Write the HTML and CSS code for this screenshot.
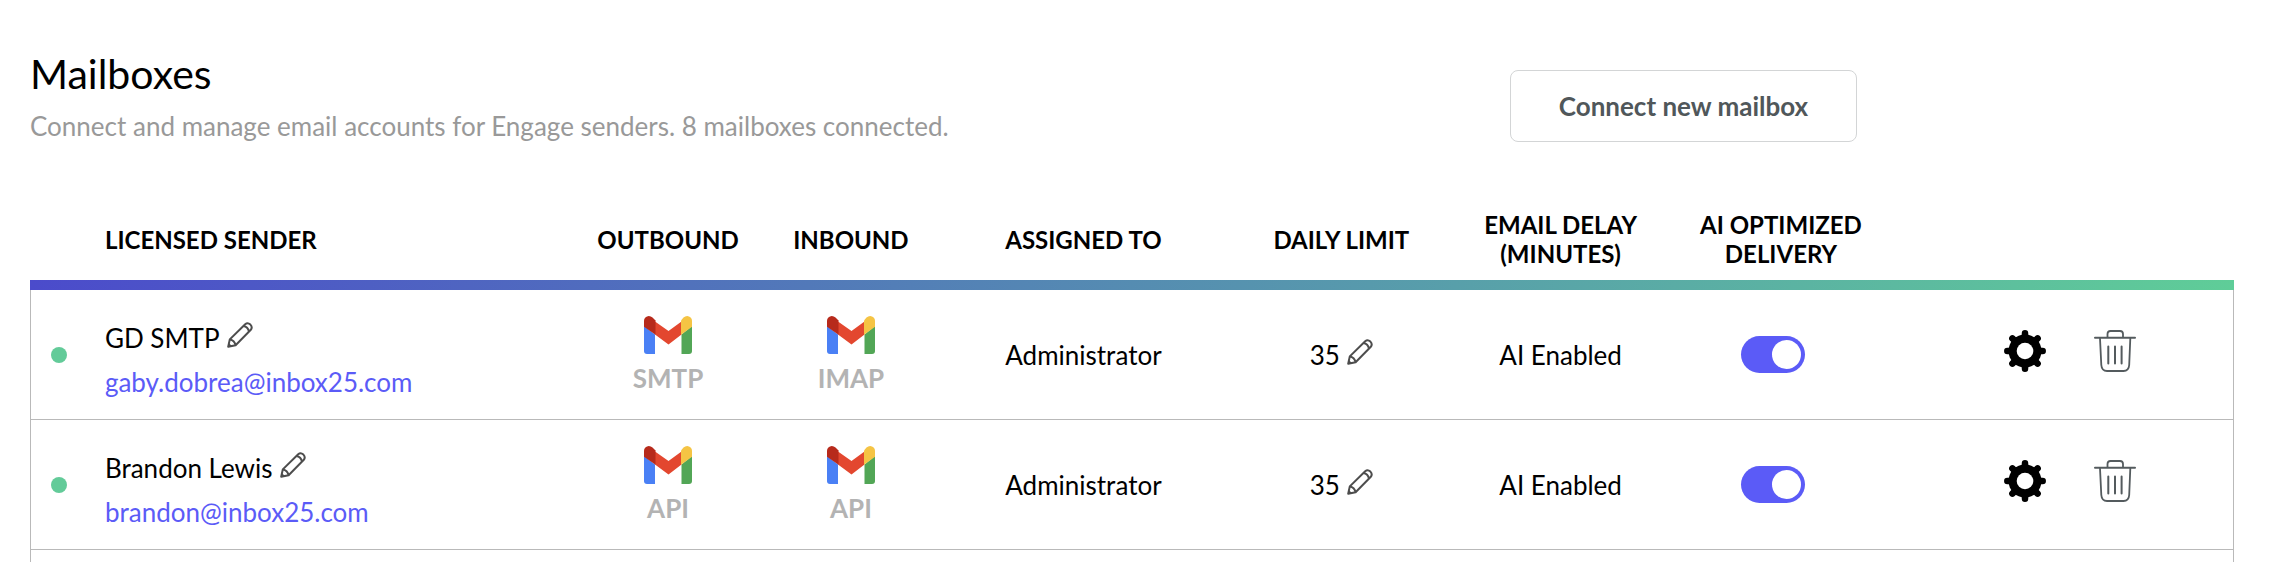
FILE: index.html
```
<!DOCTYPE html>
<html lang="en">
<head>
    <meta charset="UTF-8">
    <meta name="viewport" content="width=device-width, initial-scale=1.0">
    <title>Mailboxes</title>
    <link rel="stylesheet" href="styles.css">
</head>
<body>
    <!-- Shared icons -->
    <svg class="sprite" aria-hidden="true">
        <symbol id="icon-pencil" viewBox="0 0 26 26">
            <g fill="none" stroke="#4d4d4d" stroke-width="2" stroke-linejoin="round">
                <path d="M1.2 24.8 2.8 17.4 18.2 2.2Q20.7 0.2 23.4 2.6Q25.8 5.2 23.8 7.8L8.6 23.2Z"/>
                <path d="M16.4 4Q21 4.8 22 9.6"/>
                <path d="M2.8 17.4Q7.4 18 8.6 23.2"/>
            </g>
            <path d="M1 25 1.8 21 5 24Z" fill="#4d4d4d"/>
        </symbol>
        <symbol id="icon-gmail" viewBox="0 0 48 38">
            <path d="M0 10 11 18.5V38H3Q0 38 0 35Z" fill="#4a80f5"/>
            <path d="M48 10 37.5 18.5V38H45Q48 38 48 35Z" fill="#52a656"/>
            <path d="M11 5.5 24.5 15 37.5 5.5V18.5L24.5 28.5 11 18.5Z" fill="#e3472f"/>
            <path d="M0 10.8V5Q0 1.5 3 .4Q6-.6 8.5 1.6L11.5 4.5V18.7Z" fill="#b72a1b"/>
            <path d="M48 10.8V5Q48 1.5 45 .4Q42-.6 39.5 1.6L37 4.5V18.7Z" fill="#f5c444"/>
        </symbol>
        <symbol id="icon-gear" viewBox="0 0 42 42">
            <g stroke="#000" stroke-width="6.5" stroke-linecap="round">
                <path d="M21 3.3V38.7M3.3 21H38.7M8.4 8.4 33.6 33.6M33.6 8.4 8.4 33.6"/>
            </g>
            <circle cx="21" cy="21" r="16.5"/>
            <circle cx="21" cy="21" r="8.3" fill="#fff"/>
        </symbol>
        <symbol id="icon-trash" viewBox="0 0 42 42">
            <g fill="none" stroke="#545b5e" stroke-width="1.8" stroke-linecap="round">
                <path d="M1 7.8H41" stroke-width="2"/>
                <path d="M13.5 7V4Q13.5 1 16.5 1H26Q29 1 29 4V7"/>
                <path d="M6 8.5 7.3 35Q7.8 41 13 41H29.5Q34.8 41 35.2 35L36.3 8.5"/>
                <path d="M14.3 16.5V33.5M21 16.5V33.5M27.6 16.5V33.5" stroke-width="2"/>
            </g>
        </symbol>
    </svg>

    <header class="page-header">
        <div>
            <h1>Mailboxes</h1>
            <p>Connect and manage email accounts for Engage senders. 8 mailboxes connected.</p>
        </div>
        <button type="button" class="connect-btn">Connect new mailbox</button>
    </header>

    <table class="mailboxes">
        <colgroup>
            <col class="col-status">
            <col class="col-sender">
            <col class="col-protocol">
            <col class="col-protocol">
            <col class="col-assigned">
            <col class="col-limit">
            <col class="col-delay">
            <col class="col-ai">
            <col class="col-actions">
        </colgroup>
        <thead>
            <tr>
                <td></td>
                <th scope="col" class="left">LICENSED SENDER</th>
                <th scope="col">OUTBOUND</th>
                <th scope="col">INBOUND</th>
                <th scope="col">ASSIGNED TO</th>
                <th scope="col">DAILY LIMIT</th>
                <th scope="col">EMAIL DELAY<br>(MINUTES)</th>
                <th scope="col">AI OPTIMIZED<br>DELIVERY</th>
                <td></td>
            </tr>
        </thead>
        <tbody>
            <tr>
                <td><span class="status-dot"></span></td>
                <td class="left sender-cell">
                    <div class="sender">GD SMTP <button type="button" class="icon-btn" aria-label="Edit sender name"><svg class="pencil"><use href="#icon-pencil"/></svg></button></div>
                    <a class="email" href="#">gaby.dobrea@inbox25.com</a>
                </td>
                <td><div class="protocol"><svg class="gmail"><use href="#icon-gmail"/></svg>SMTP</div></td>
                <td><div class="protocol"><svg class="gmail"><use href="#icon-gmail"/></svg>IMAP</div></td>
                <td>Administrator</td>
                <td><div class="limit">35 <button type="button" class="icon-btn" aria-label="Edit daily limit"><svg class="pencil"><use href="#icon-pencil"/></svg></button></div></td>
                <td>AI Enabled</td>
                <td class="toggle-cell"><input type="checkbox" class="toggle" aria-label="AI optimized delivery" checked></td>
                <td>
                    <div class="actions">
                        <button type="button" class="icon-btn" aria-label="Settings"><svg class="action"><use href="#icon-gear"/></svg></button>
                        <button type="button" class="icon-btn" aria-label="Delete"><svg class="action"><use href="#icon-trash"/></svg></button>
                    </div>
                </td>
            </tr>
            <tr>
                <td><span class="status-dot"></span></td>
                <td class="left sender-cell">
                    <div class="sender">Brandon Lewis <button type="button" class="icon-btn" aria-label="Edit sender name"><svg class="pencil"><use href="#icon-pencil"/></svg></button></div>
                    <a class="email" href="#">brandon@inbox25.com</a>
                </td>
                <td><div class="protocol"><svg class="gmail"><use href="#icon-gmail"/></svg>API</div></td>
                <td><div class="protocol"><svg class="gmail"><use href="#icon-gmail"/></svg>API</div></td>
                <td>Administrator</td>
                <td><div class="limit">35 <button type="button" class="icon-btn" aria-label="Edit daily limit"><svg class="pencil"><use href="#icon-pencil"/></svg></button></div></td>
                <td>AI Enabled</td>
                <td class="toggle-cell"><input type="checkbox" class="toggle" aria-label="AI optimized delivery" checked></td>
                <td>
                    <div class="actions">
                        <button type="button" class="icon-btn" aria-label="Settings"><svg class="action"><use href="#icon-gear"/></svg></button>
                        <button type="button" class="icon-btn" aria-label="Delete"><svg class="action"><use href="#icon-trash"/></svg></button>
                    </div>
                </td>
            </tr>
            <tr class="tail">
                <td colspan="9"></td>
            </tr>
        </tbody>
    </table>
</body>
</html>
```
FILE: styles.css
```
:root {
    --primary: #5b5bf7;
    --green: #63cb99;
    --line: #b9b9b9;
}

* {
    box-sizing: border-box;
}

body {
    margin: 0;
    padding: 50px 62px 0 30px;
    background: #fff;
    color: #000;
    font-family: Lato, "Liberation Sans", sans-serif;
    font-size: 26px;
    line-height: 32px;
}

.sprite {
    display: none;
}

.page-header {
    display: flex;
    justify-content: space-between;
    align-items: flex-start;
    padding-right: 17.1%;
    margin-bottom: 58px;
}

.page-header h1 {
    margin: 0 0 12px;
    font-size: 41px;
    font-weight: 400;
    line-height: 48px;
}

.page-header p {
    margin: 0;
    color: #999;
}

.connect-btn {
    margin-top: 20px;
    padding: 19px 48px;
    border: 1px solid #d3d5d6;
    border-radius: 8px;
    background: #fff;
    color: #50575a;
    font: inherit;
    font-weight: 700;
    cursor: pointer;
}

.icon-btn {
    display: inline-flex;
    padding: 0;
    border: none;
    background: none;
    cursor: pointer;
}

.mailboxes {
    width: 100%;
    table-layout: fixed;
    border-collapse: separate;
    border-spacing: 0;
    text-align: center;
}

.col-status { width: 3.4%; }
.col-sender { width: 21.4%; }
.col-protocol { width: 8.3%; }
.col-assigned { width: 12.8%; }
.col-limit { width: 10.6%; }
.col-delay { width: 9.3%; }
.col-ai { width: 10.7%; }

.mailboxes td,
.mailboxes th {
    padding: 0;
}

.mailboxes .left {
    text-align: left;
}

.mailboxes thead tr {
    background: linear-gradient(to right, #4b4bcb, #5fcd98) bottom / 100% 10px no-repeat;
}

.mailboxes th {
    padding: 10px 0 22px;
    font-size: 24px;
    line-height: 29px;
}

.mailboxes tbody td {
    height: 130px;
    border-bottom: 1px solid var(--line);
}

.mailboxes tbody td:first-child {
    border-left: 1px solid var(--line);
}

.mailboxes tbody td:last-child {
    border-right: 1px solid var(--line);
}

.mailboxes .tail td {
    height: 12px;
    border-bottom: none;
}

.status-dot {
    display: block;
    width: 16px;
    height: 16px;
    margin-left: 20px;
    border-radius: 50%;
    background: var(--green);
}

.mailboxes .sender-cell {
    padding-top: 10px;
}

.sender,
.limit {
    display: flex;
    gap: 7px;
}

.sender {
    margin-bottom: 12px;
}

.limit {
    justify-content: center;
}

.email {
    display: block;
    color: var(--primary);
    text-decoration: none;
}

.pencil {
    width: 26px;
    height: 26px;
}

.protocol {
    display: flex;
    flex-direction: column;
    align-items: center;
    gap: 8px;
    color: #b3b3b3;
    font-weight: 700;
}

.gmail {
    width: 48px;
    height: 38px;
}

.toggle {
    appearance: none;
    display: block;
    width: 64px;
    height: 37px;
    margin: 0 auto;
    border-radius: 19px;
    background: #ccc;
    cursor: pointer;
}

.toggle::before {
    content: '';
    display: block;
    width: 29px;
    height: 29px;
    margin: 4px;
    border-radius: 50%;
    background: #fff;
}

.toggle:checked {
    background: var(--primary);
}

.toggle:checked::before {
    margin-left: 31px;
}

.mailboxes .toggle-cell {
    padding-right: 16px;
}

.actions {
    display: flex;
    gap: 48px;
    padding: 0 0 8px 105px;
}

.action {
    width: 42px;
    height: 42px;
}
```
